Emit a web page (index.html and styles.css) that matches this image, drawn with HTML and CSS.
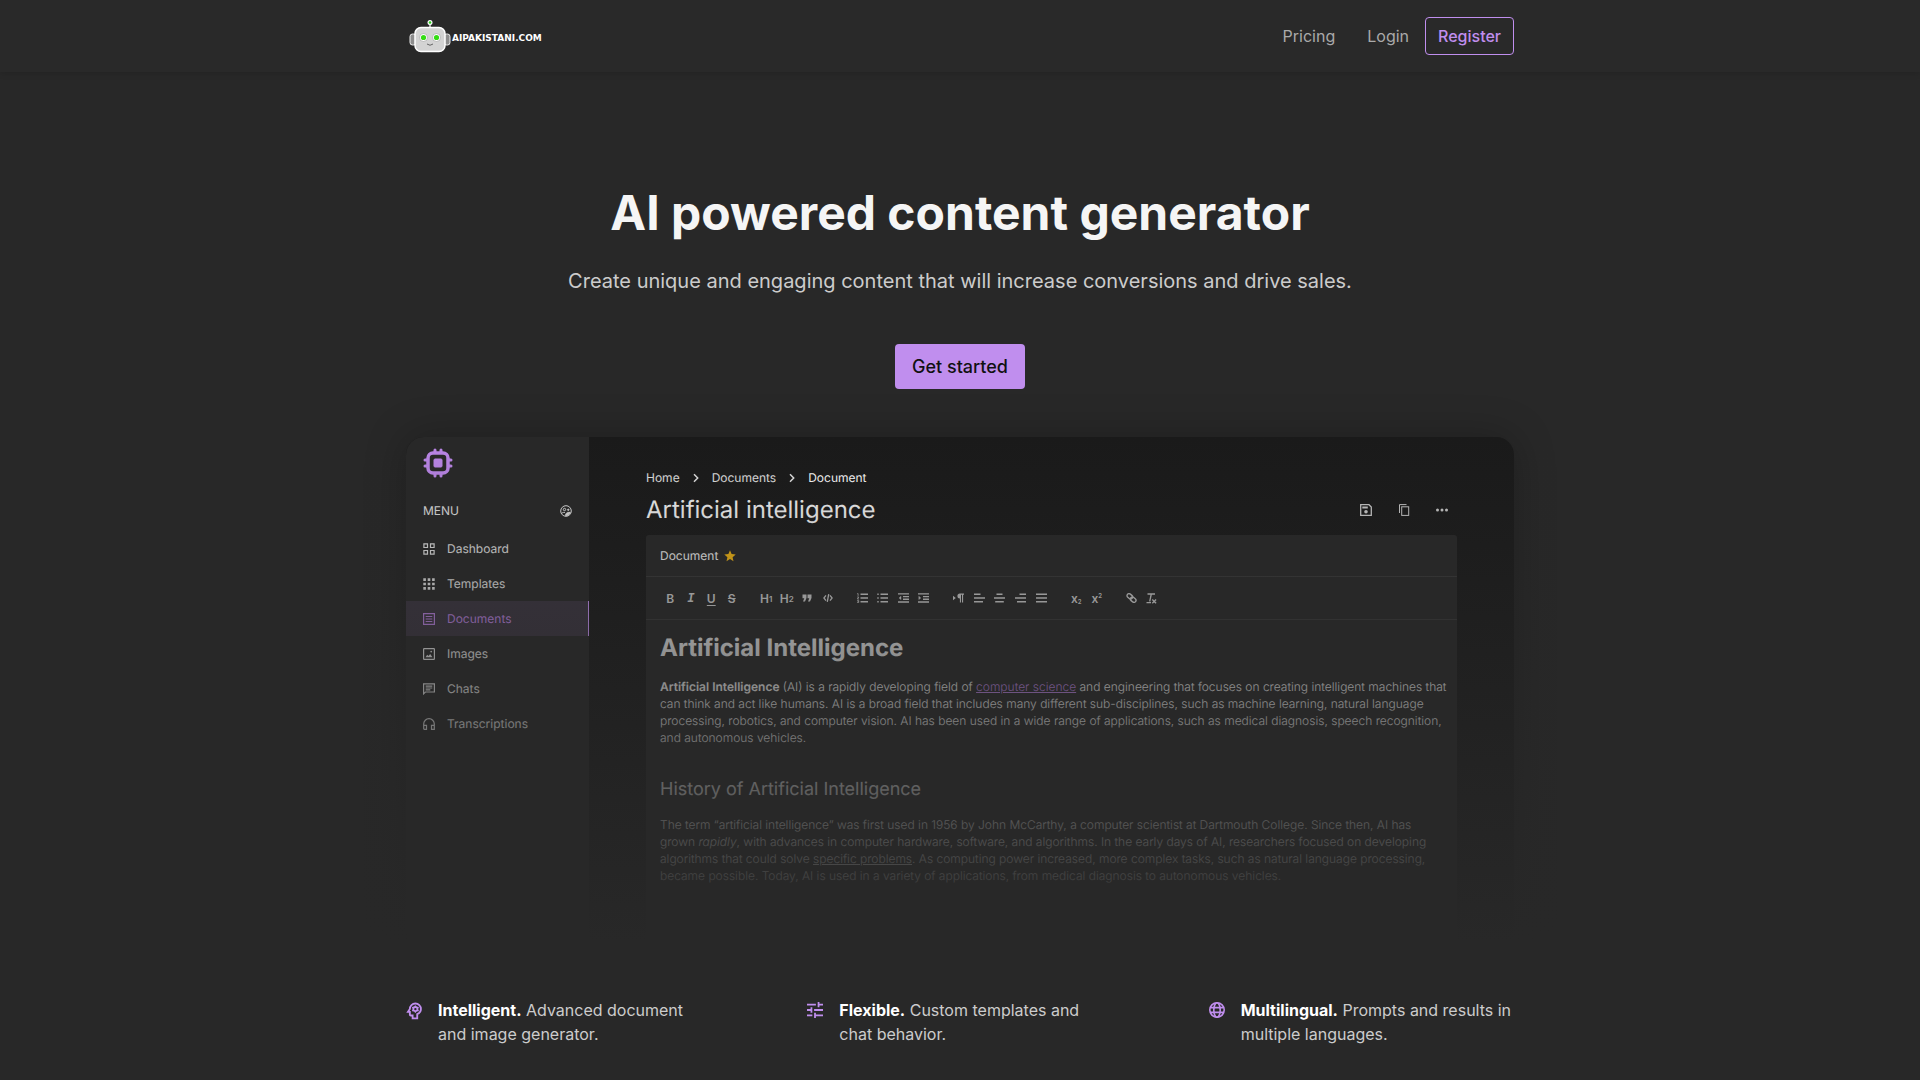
FILE: index.html
```html
<!DOCTYPE html>
<html lang="en">
  <head>
    <meta charset="utf-8">
    <meta name="viewport" content="width=device-width, initial-scale=1">
    <title>AI powered content generator - aipakistani.com</title>
    <link rel="stylesheet" href="styles.css">
  </head>

  <body>
    <header class="header">
      <div class="container header-inner">
        <a href="#" class="logo">
          <svg width="42" height="34" viewBox="0 0 42 34">
            <path d="M21 5v5" stroke="#ddd" stroke-width="1.5"/>
            <circle cx="21" cy="3.500" r="2.500" fill="#fff"/>
            <circle cx="21" cy="3.500" r="1.300" fill="#2bd01c"/>
            <rect x="1" y="15" width="6" height="11" rx="2.500" fill="#8d8d8d" stroke="#eee"/>
            <rect x="35" y="15" width="6" height="11" rx="2.500" fill="#8d8d8d" stroke="#eee"/>
            <rect x="6" y="8.500" width="30" height="24" rx="6" fill="#d3d3d3" stroke="#fff" stroke-width="1.500"/>
            <circle cx="14.500" cy="18.500" r="4" fill="#fff" stroke="#999" stroke-width=".6"/>
            <circle cx="27.500" cy="18.500" r="4" fill="#fff" stroke="#999" stroke-width=".6"/>
            <circle cx="14.500" cy="18.500" r="2.600" fill="#35dc14"/>
            <circle cx="27.500" cy="18.500" r="2.600" fill="#35dc14"/>
            <path d="M18 25q3 2.500 6 0" fill="none" stroke="#666"/>
          </svg>
          <span>AIPAKISTANI.COM</span>
        </a>
        <nav class="nav">
          <a href="#pricing">Pricing</a>
          <a href="#login">Login</a>
          <a href="#register" class="register">Register</a>
        </nav>
      </div>
    </header>

    <main class="container">
      <section class="hero">
        <h1>AI powered content generator</h1>
        <p>Create unique and engaging content that will increase conversions and drive sales.</p>
        <a href="#start" class="start">Get started</a>
      </section>

      <section class="preview">
        <div class="app">
          <aside class="sidebar">
            <svg class="chip" width="30" height="30" viewBox="0 0 30 30" fill="none" stroke="#bb86e8">
              <rect x="5" y="5" width="20" height="20" rx="5" stroke-width="3.500"/>
              <rect x="11" y="11" width="8" height="8" rx="1" fill="#bb86e8" stroke-width="1"/>
              <path d="M12 2v2M18 2v2M12 26v2M18 26v2M2 12h2M2 18h2M26 12h2M26 18h2" stroke-width="3" stroke-linecap="round"/>
            </svg>
            <div class="menu-title">
              <span>MENU</span>
              <svg width="12" height="12" viewBox="0 0 12 12" fill="none" stroke="currentColor">
                <circle cx="6" cy="6" r="5.300"/>
                <circle cx="4.500" cy="4.500" r="1.200"/>
                <circle cx="8.300" cy="4.800" r=".7" fill="currentColor"/>
                <path d="M5.500 11V9q1.500-2.300 5-1.800Q9.500 10.500 5.500 11z" fill="currentColor" stroke-width=".5"/>
                <path d="M1.500 8.300q1.700-1.300 3.500-.8" stroke-width=".9"/>
              </svg>
            </div>
            <ul class="menu">
              <li><a href="#dashboard">
                <svg width="12" height="12" viewBox="0 0 12 12" fill="none" stroke="currentColor" stroke-width="1.200"><path d="M.9.9h3.600v3.600H.9zM7.500.9h3.600v3.600H7.500zM.9 7.500h3.600v3.600H.9zM7.500 7.500h3.600v3.600H7.500z"/></svg>
                Dashboard</a></li>
              <li><a href="#templates">
                <svg width="12" height="12" viewBox="0 0 12 12" fill="currentColor"><path d="M.3.3h2.600v2.600H.3zM4.700.3h2.600v2.600H4.700zM9.100.3h2.600v2.600H9.100zM.3 4.700h2.600v2.600H.3zM4.700 4.700h2.600v2.600H4.700zM9.100 4.700h2.600v2.600H9.100zM.3 9.100h2.600v2.600H.3zM4.700 9.100h2.600v2.600H4.700zM9.100 9.100h2.600v2.600H9.100z"/></svg>
                Templates</a></li>
              <li><a href="#documents" class="active">
                <svg width="12" height="12" viewBox="0 0 12 12" fill="none" stroke="currentColor" stroke-width="1.200"><path d="M.6.6h10.800v10.800H.6zM2.700 3.500h6.600M2.700 6h6.600M2.700 8.500h6.600"/></svg>
                Documents</a></li>
              <li><a href="#images">
                <svg width="12" height="12" viewBox="0 0 12 12" fill="none" stroke="currentColor" stroke-width="1.200"><rect x=".6" y=".6" width="10.800" height="10.800" rx=".6"/><path d="M2.500 9.200l1.700-2.400 1.300 1.200 1.700-2 2.300 3.200z" fill="currentColor" stroke="none"/><circle cx="8.200" cy="3.600" r=".9" fill="currentColor" stroke="none"/></svg>
                Images</a></li>
              <li><a href="#chats">
                <svg width="12" height="12" viewBox="0 0 12 12" fill="none" stroke="currentColor" stroke-width="1.200"><path d="M.6 10.800V.8h10.800v8.200H2.400zM2.700 3.200h6.600M2.700 5h6.600M2.700 6.800h4.600"/></svg>
                Chats</a></li>
              <li><a href="#transcriptions">
                <svg width="12" height="12" viewBox="0 0 12 12" fill="none" stroke="currentColor" stroke-width="1.200"><path d="M.7 11.300V6a5.300 5.300 0 0 1 10.600 0v5.300H8.500V7.400h2.800M.7 7.400h2.800v3.900H.7"/></svg>
                Transcriptions</a></li>
            </ul>
          </aside>

          <div class="content">
            <div class="breadcrumb">
              <a href="#home">Home</a>
              <svg width="16" height="12" viewBox="0 0 16 12" fill="none" stroke="currentColor" stroke-width="1.500"><path d="M6 2.300L9.700 6 6 9.700"/></svg>
              <a href="#documents">Documents</a>
              <svg width="16" height="12" viewBox="0 0 16 12" fill="none" stroke="currentColor" stroke-width="1.500"><path d="M6 2.300L9.700 6 6 9.700"/></svg>
              <span class="current">Document</span>
            </div>

            <div class="title-row">
              <h2>Artificial intelligence</h2>
              <div class="actions">
                <button type="button" aria-label="Save">
                  <svg width="12" height="12" viewBox="0 0 12 12" fill="none" stroke="currentColor" stroke-width="1.300"><path d="M.7.7h8.300l2.300 2.300v8.300H.7z"/><path d="M2.300 3.500h5.500" stroke-width="2"/><circle cx="6" cy="7.800" r="1.800" fill="currentColor" stroke="none"/></svg>
                </button>
                <button type="button" aria-label="Copy">
                  <svg width="12" height="12" viewBox="0 0 12 12" fill="none" stroke="currentColor"><path d="M1.500 9V.6h7"/><rect x="3.700" y="2.800" width="7" height="8.600"/></svg>
                </button>
                <button type="button" aria-label="More">
                  <svg width="12" height="12" viewBox="0 0 12 12" fill="currentColor"><circle cx="1.500" cy="6" r="1.500"/><circle cx="6" cy="6" r="1.500"/><circle cx="10.500" cy="6" r="1.500"/></svg>
                </button>
              </div>
            </div>

            <div class="document">
              <div class="document-head">
                Document
                <svg width="12" height="12" viewBox="0 0 12 12" fill="#f0b414"><path d="M6 .3l1.600 3.800 4.100.4-3.100 2.700.9 4.100L6 9.100l-3.500 2.200.9-4.100L.3 4.500l4.100-.4z"/></svg>
              </div>

              <div class="toolbar">
                <div class="group">
                  <button type="button">B</button>
                  <button type="button" class="italic">I</button>
                  <button type="button" class="underline">U</button>
                  <button type="button" class="strike">S</button>
                </div>
                <div class="group">
                  <button type="button">H<small>1</small></button>
                  <button type="button">H<small>2</small></button>
                  <button type="button" aria-label="Quote">
                    <svg width="10" height="10" viewBox="0 0 10 10" fill="currentColor"><path d="M.5 1.500h4V5L3 8.500H1L2.300 5.300H.5zM5.500 1.500h4V5L8 8.500H6l1.300-3.200H5.500z"/></svg>
                  </button>
                  <button type="button" aria-label="Code">
                    <svg width="10" height="10" viewBox="0 0 10 10" fill="none" stroke="currentColor" stroke-width="1.300"><path d="M3 2.300L.9 5 3 7.700M7 2.300L9.100 5 7 7.700M5.700 1.200L4.300 8.800"/></svg>
                  </button>
                </div>
                <div class="group">
                  <button type="button" aria-label="Ordered list">
                    <svg width="11" height="10" viewBox="0 0 11 10" fill="none" stroke="currentColor" stroke-width="1.400"><path d="M3.500 1.200H11M3.500 5H11M3.500 8.800H11"/><path d="M.2.6h.9v2.200M.2 4h1.600L.3 6h1.700M.2 7.500h1.500v2H.2M.6 8.500h1" stroke-width=".8"/></svg>
                  </button>
                  <button type="button" aria-label="Bullet list">
                    <svg width="11" height="10" viewBox="0 0 11 10" stroke="currentColor" stroke-width="1.400"><path d="M3.500 1.200H11M3.500 5H11M3.500 8.800H11M.3 1.200h1.400M.3 5h1.400M.3 8.800h1.400"/></svg>
                  </button>
                  <button type="button" aria-label="Outdent">
                    <svg width="11" height="10" viewBox="0 0 11 10" stroke="currentColor" stroke-width="1.400"><path d="M0 .9h11M5 3.600h6M5 6.200h6M0 9h11"/><path d="M3 3.200v3.400L1 5z" fill="currentColor" stroke-width=".4"/></svg>
                  </button>
                  <button type="button" aria-label="Indent">
                    <svg width="11" height="10" viewBox="0 0 11 10" stroke="currentColor" stroke-width="1.400"><path d="M0 .9h11M5 3.600h6M5 6.200h6M0 9h11"/><path d="M.8 3.200v3.400L2.800 5z" fill="currentColor" stroke-width=".4"/></svg>
                  </button>
                </div>
                <div class="group group-five">
                  <button type="button" aria-label="Text direction">
                    <svg width="11" height="10" viewBox="0 0 11 10" fill="currentColor"><path d="M0 2.700L2.800 5 0 7.300zM11 .5v1.200h-.9v7.800H9V1.700H8v7.800H6.900V5.500a2.500 2.500 0 0 1 0-5z"/></svg>
                  </button>
                  <button type="button" aria-label="Align left">
                    <svg width="11" height="10" viewBox="0 0 11 10" stroke="currentColor" stroke-width="1.400"><path d="M0 1.200h6.500M0 5h11M0 8.800h9"/></svg>
                  </button>
                  <button type="button" aria-label="Align center">
                    <svg width="11" height="10" viewBox="0 0 11 10" stroke="currentColor" stroke-width="1.400"><path d="M2.500 1.200h6M0 5h11M1.200 8.800h8.600"/></svg>
                  </button>
                  <button type="button" aria-label="Align right">
                    <svg width="11" height="10" viewBox="0 0 11 10" stroke="currentColor" stroke-width="1.400"><path d="M4.500 1.200H11M0 5h11M2 8.800h9"/></svg>
                  </button>
                  <button type="button" aria-label="Justify">
                    <svg width="11" height="10" viewBox="0 0 11 10" stroke="currentColor" stroke-width="1.400"><path d="M0 1.200h11M0 5h11M0 8.800h11"/></svg>
                  </button>
                </div>
                <div class="group group-two">
                  <button type="button">x<small class="low">2</small></button>
                  <button type="button">x<small class="high">2</small></button>
                </div>
                <div class="group group-two">
                  <button type="button" aria-label="Link">
                    <svg width="11" height="10" viewBox="0 0 11 10" fill="none" stroke="currentColor" stroke-width="1.400"><rect x=".8" y="1.300" width="6" height="4" rx="2" transform="rotate(40 3.800 3.300)"/><rect x="4.200" y="4.700" width="6" height="4" rx="2" transform="rotate(40 7.200 6.700)"/></svg>
                  </button>
                  <button type="button" aria-label="Clear formatting">
                    <svg width="11" height="11" viewBox="0 0 11 11" fill="none" stroke="currentColor" stroke-width="1.300"><path d="M1.500 1h7.500M5.300 1L3.700 8.500M.5 9.600h4.500M6.300 6.500l3.800 3.800M10.100 6.500l-3.800 3.800"/></svg>
                  </button>
                </div>
              </div>

              <article class="article">
                <h3>Artificial Intelligence</h3>
                <p><b>Artificial Intelligence</b> (AI) is a rapidly developing field of <a href="#cs">computer science</a> and engineering that focuses on creating intelligent machines that can think and act like humans. AI is a broad field that includes many different sub-disciplines, such as machine learning, natural language processing, robotics, and computer vision. AI has been used in a wide range of applications, such as medical diagnosis, speech recognition, and autonomous vehicles.</p>
                <h4>History of Artificial Intelligence</h4>
                <p>The term “artificial intelligence” was first used in 1956 by John McCarthy, a computer scientist at Dartmouth College. Since then, AI has grown <i>rapidly</i>, with advances in computer hardware, software, and algorithms. In the early days of AI, researchers focused on developing algorithms that could solve <u>specific problems</u>. As computing power increased, more complex tasks, such as natural language processing, became possible. Today, AI is used in a variety of applications, from medical diagnosis to autonomous vehicles.</p>
              </article>
            </div>
          </div>
        </div>
      </section>

      <section class="features">
        <div class="feature">
          <svg width="16" height="24" viewBox="3 -2 17 26" fill="none" stroke="currentColor" stroke-width="2">
            <path d="M15 20v-4.500c2.400-1 4-3.200 4-5.500a6 6 0 0 0-12 0l-2 3h2v3c0 .6.400 1 1 1h2v3z"/>
            <circle cx="13" cy="10" r="2.300"/>
            <path d="M13 6V8M13 12v2M9.500 8l1.800 1M14.700 11l1.800 1M16.500 8L14.700 9M11.300 11l-1.800 1" stroke-width="1.400"/>
          </svg>
          <p><b>Intelligent.</b> Advanced document and image generator.</p>
        </div>
        <div class="feature">
          <svg width="16" height="24" viewBox="3 -1.500 18 27" fill="currentColor">
            <path d="M3 17v2h6v-2H3zM3 5v2h10V5H3zm10 16v-2h8v-2h-8v-2h-2v6h2zM7 9v2H3v2h4v2h2V9H7zm14 4v-2H11v2h10zm-6-4h2V7h4V5h-4V3h-2v6z"/>
          </svg>
          <p><b>Flexible.</b> Custom templates and chat behavior.</p>
        </div>
        <div class="feature">
          <svg width="16" height="24" viewBox="2 -3 20 30" fill="none" stroke="currentColor" stroke-width="2">
            <circle cx="12" cy="12" r="9"/>
            <ellipse cx="12" cy="12" rx="4" ry="9"/>
            <path d="M3.500 9h17M3.500 15h17"/>
          </svg>
          <p><b>Multilingual.</b> Prompts and results in multiple languages.</p>
        </div>
      </section>
    </main>
  </body>
</html>
```
FILE: styles.css
```css
* {
  box-sizing: border-box;
}

body {
  margin: 0;
  background: #282828;
  color: #ccc;
  font-family: Inter, sans-serif;
  font-size: 16px;
  line-height: 24px;
}

h1, h2, h3, h4, p, ul {
  margin: 0;
  padding: 0;
}

a {
  color: inherit;
  text-decoration: none;
}

svg {
  flex: none;
}

.container {
  max-width: 1140px;
  margin: 0 auto;
  padding: 0 16px;
}

/* header */
.header {
  background: #292929;
  box-shadow: 0 2px 6px rgba(0, 0, 0, 0.12);
}

.header-inner {
  display: flex;
  align-items: center;
  justify-content: space-between;
  height: 72px;
}

.logo {
  display: flex;
  align-items: center;
  gap: 1px;
  padding-left: 3px;
  color: #fff;
  font-family: "DejaVu Sans", sans-serif;
  font-size: 9px;
  font-weight: 700;
}

.logo span {
  padding-top: 4px;
}

.nav {
  display: flex;
  align-items: center;
  color: #aaa;
}

.nav a {
  padding: 6px 16px;
}

.nav .register {
  padding: 6px 12px;
  border: 1px solid #c08eee;
  border-radius: 4px;
  color: #c08eee;
  font-weight: 500;
}

/* hero */
.hero {
  display: flex;
  flex-direction: column;
  align-items: center;
  padding: 112px 0 48px;
  text-align: center;
}

.hero h1 {
  margin-bottom: 24px;
  color: #f5f5f5;
  font-size: 48px;
  font-weight: 700;
  line-height: 58px;
}

.hero p {
  margin-bottom: 48px;
  font-size: 20px;
  line-height: 30px;
}

.start {
  padding: 9px 17px;
  border-radius: 4px;
  background: #c08eee;
  color: #111;
  font-size: 18px;
  font-weight: 500;
  line-height: 27px;
}

/* app preview, fades into the page */
.preview {
  position: relative;
  margin-bottom: 48px;
}

.preview::after {
  content: "";
  position: absolute;
  inset: 0 -60px -48px;
  background: linear-gradient(rgba(40, 40, 40, 0), #282828 90%);
  pointer-events: none;
}

.app {
  display: flex;
  min-height: 513px;
  overflow: hidden;
  border-radius: 18px;
  background: #1a1a1a;
  box-shadow: 0 0 40px rgba(0, 0, 0, 0.25);
  color: #e0e0e0;
  font-size: 12px;
  line-height: 17px;
  text-rendering: geometricPrecision;
}

.sidebar {
  width: 183px;
  flex: none;
  padding-top: 11px;
  background: #282828;
}

.chip {
  display: block;
  margin-left: 17px;
}

.menu-title {
  display: flex;
  align-items: center;
  justify-content: space-between;
  padding: 24px 17px 12px;
}

.menu {
  list-style: none;
}

.menu a {
  display: flex;
  align-items: center;
  gap: 12px;
  height: 35px;
  padding-left: 17px;
}

.menu .active {
  border-right: 1px solid #c792f5;
  background: #3a343f;
  color: #b57edc;
}

.content {
  flex: 1;
  min-width: 0;
  padding: 32px 57px 0;
}

.breadcrumb {
  display: flex;
  align-items: center;
  gap: 8px;
}

.breadcrumb .current {
  color: #fff;
}

.title-row {
  display: flex;
  align-items: center;
  justify-content: space-between;
  height: 49px;
  padding-bottom: 1px;
}

.title-row h2 {
  color: #f5f5f5;
  font-size: 24px;
  font-weight: 400;
  line-height: 32px;
}

.actions {
  display: flex;
  gap: 26px;
  padding-right: 9px;
}

.content button {
  display: flex;
  align-items: center;
  justify-content: center;
  padding: 0;
  border: none;
  background: none;
  color: #ccc;
  cursor: pointer;
}

.document {
  min-height: 415px;
  border-radius: 3px;
  background: #282828;
}

.document-head {
  display: flex;
  align-items: center;
  gap: 6px;
  height: 42px;
  padding: 0 14px;
  border-bottom: 1px solid #383838;
  color: #eee;
}

.toolbar {
  display: flex;
  align-items: center;
  gap: 14px;
  height: 43px;
  padding: 0 14px;
  border-bottom: 1px solid #383838;
}

.group {
  display: flex;
  width: 82px;
}

.group-five {
  width: 104px;
}

.group-two {
  width: 41px;
}

.group button {
  flex: 1;
  height: 20px;
  font-family: Inter, sans-serif;
  font-size: 12px;
  font-weight: 600;
}

.group small {
  padding-top: 2px;
  font-size: 8px;
}

.group .low {
  padding-top: 7px;
  font-size: 6px;
}

.group .high {
  padding: 0 0 5px;
  font-size: 6px;
}

.group .italic {
  padding-top: 2px;
  font-family: "Liberation Mono", monospace;
  font-style: italic;
}

.group .underline {
  text-decoration: underline;
  text-underline-offset: 2px;
}

.group .strike {
  text-decoration: line-through;
}

.article {
  padding: 12px 8px 0 14px;
}

.article p {
  color: #eee;
  font-weight: 300;
}

.article h3 {
  margin-bottom: 14px;
  font-size: 24px;
  font-weight: 700;
  line-height: 32px;
}

.article h4 {
  margin: 32px 0 14px;
  font-size: 18px;
  font-weight: 400;
  line-height: 24px;
}

.article b {
  font-weight: 600;
}

.article a {
  color: #b57edc;
  text-decoration: underline;
}

/* features */
.features {
  display: grid;
  grid-template-columns: repeat(3, 1fr);
  gap: 96px;
  padding-bottom: 32px;
}

.feature {
  display: flex;
  gap: 16px;
}

.feature svg {
  color: #c08eee;
}

.feature b {
  color: #fff;
  font-weight: 700;
}
```
